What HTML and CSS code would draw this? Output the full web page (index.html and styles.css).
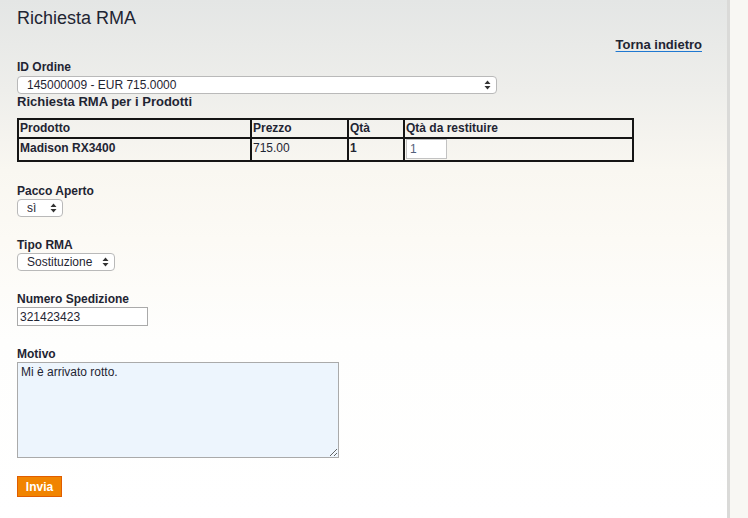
FILE: index.html
```html
<!DOCTYPE html>
<html lang="it">
  <head>
    <meta charset="UTF-8" />
    <meta name="viewport" content="width=device-width, initial-scale=1.0" />
    <title>Richiesta RMA</title>
    <link rel="stylesheet" href="styles.css">
  </head>
  <body>
    <div class="main">
      <h1>Richiesta RMA</h1>
      <div class="back"><a href="#">Torna indietro</a></div>

      <form>
        <label class="lbl first">ID Ordine</label>
        <span class="sel wide">
          <select>
            <option>145000009 - EUR 715.0000</option>
          </select>
          <svg width="7" height="10" viewBox="0 0 7 10"><path d="M3.5 0.5 L6.5 4 H0.5 Z M3.5 9.5 L6.5 6 H0.5 Z" fill="#333"/></svg>
        </span>

        <h2>Richiesta RMA per i Prodotti</h2>
        <table>
          <tr>
            <th class="c1">Prodotto</th>
            <th class="c2">Prezzo</th>
            <th class="c3">Qtà</th>
            <th>Qtà da restituire</th>
          </tr>
          <tr>
            <td><b>Madison RX3400</b></td>
            <td>715.00</td>
            <td><b>1</b></td>
            <td><input class="qty" type="text" value="1"></td>
          </tr>
        </table>

        <div class="field open">
          <label class="lbl">Pacco Aperto</label>
          <span class="sel small">
            <select><option>sì</option></select>
            <svg width="7" height="10" viewBox="0 0 7 10"><path d="M3.5 0.5 L6.5 4 H0.5 Z M3.5 9.5 L6.5 6 H0.5 Z" fill="#333"/></svg>
          </span>
        </div>

        <div class="field">
          <label class="lbl">Tipo RMA</label>
          <span class="sel mid">
            <select><option>Sostituzione</option></select>
            <svg width="7" height="10" viewBox="0 0 7 10"><path d="M3.5 0.5 L6.5 4 H0.5 Z M3.5 9.5 L6.5 6 H0.5 Z" fill="#333"/></svg>
          </span>
        </div>

        <div class="field">
          <label class="lbl">Numero Spedizione</label>
          <input class="txt" type="text" value="321423423">
        </div>

        <div class="field">
          <label class="lbl">Motivo</label>
          <textarea>Mi è arrivato rotto.</textarea>
        </div>

        <button type="button" class="send">Invia</button>
      </form>
    </div>
    <div class="side"></div>
  </body>
</html>
```

FILE: styles.css
```css
* {
  margin: 0;
  padding: 0;
  box-sizing: border-box;
}

body {
  display: flex;
  min-height: 100vh;
  font-family: "Liberation Sans", Arial, sans-serif;
  color: #1f2533;
  background-color: #f8f7f3;
}

.main {
  width: 730px;
  padding: 8px 25px 0 17px;
  border-right: 3px solid #dadad8;
  background: linear-gradient(to bottom, #e4e6e5 0, #eeeeeb 90px, #f9f7f1 170px, #fcfaf5 240px, #fefefd 340px, #fff 100%);
}

.side {
  flex: 1;
}

h1 {
  font-size: 18px;
  line-height: 21px;
  font-weight: normal;
}

.back {
  margin-top: 8px;
  text-align: right;
  font-size: 13px;
  line-height: 16px;
  font-weight: bold;
}

.back a {
  color: #1f2533;
  text-decoration: underline;
  text-decoration-color: #1f78d1;
  text-underline-offset: 2px;
}

.lbl {
  display: block;
  font-size: 12px;
  line-height: 14px;
  font-weight: bold;
  margin-bottom: 1px;
}

.lbl.first {
  margin-top: 7px;
  margin-bottom: 2px;
}

.sel {
  position: relative;
  display: block;
  height: 18px;
}

.sel select {
  display: block;
  appearance: none;
  -webkit-appearance: none;
  width: 100%;
  height: 18px;
  padding: 0 0 0 9px;
  border: 1px solid #b9b9b9;
  border-radius: 4px;
  background: #fff;
  font-family: inherit;
  font-size: 12px;
  color: #1f2533;
}

.sel svg {
  position: absolute;
  right: 6px;
  top: 4px;
}

.sel.wide {
  width: 480px;
}

.sel.small {
  width: 46px;
}

.sel.mid {
  width: 98px;
}

h2 {
  font-size: 13px;
  line-height: 16px;
  font-weight: bold;
  margin-bottom: 8px;
}

table {
  width: 617px;
  border-collapse: collapse;
  font-size: 12px;
}

th, td {
  border: 2px solid #151515;
  text-align: left;
  vertical-align: top;
  padding: 0 0 0 1px;
  line-height: 15px;
}

th {
  height: 19px;
  padding-top: 1px;
}

td {
  height: 23px;
  padding-top: 2px;
}

td:last-child {
  padding-top: 0;
}

.c1 { width: 233px; }
.c2 { width: 97px; }
.c3 { width: 56px; }

.qty {
  display: block;
  width: 41px;
  height: 20px;
  border: 1px solid #c2c2c2;
  padding-left: 3px;
  font-family: inherit;
  font-size: 12px;
  color: #52607a;
  background: #fff;
}

.field {
  margin-top: 21px;
}

.field.open {
  margin-top: 22px;
}

.txt {
  display: block;
  width: 131px;
  height: 19px;
  border: 1px solid #aaa;
  padding-left: 2px;
  font-family: inherit;
  font-size: 12px;
  color: #1f2533;
  background: #fff;
}

textarea {
  display: block;
  width: 322px;
  height: 96px;
  border: 1px solid #aaa;
  padding: 2px 3px;
  background: #edf5fd;
  font-family: inherit;
  font-size: 12px;
  color: #1f2533;
  resize: both;
}

.send {
  display: block;
  margin-top: 18px;
  width: 45px;
  height: 21px;
  border: 1px solid #e05d00;
  background: #f18400;
  color: #fff;
  font-family: inherit;
  font-size: 12px;
  font-weight: bold;
}
```
